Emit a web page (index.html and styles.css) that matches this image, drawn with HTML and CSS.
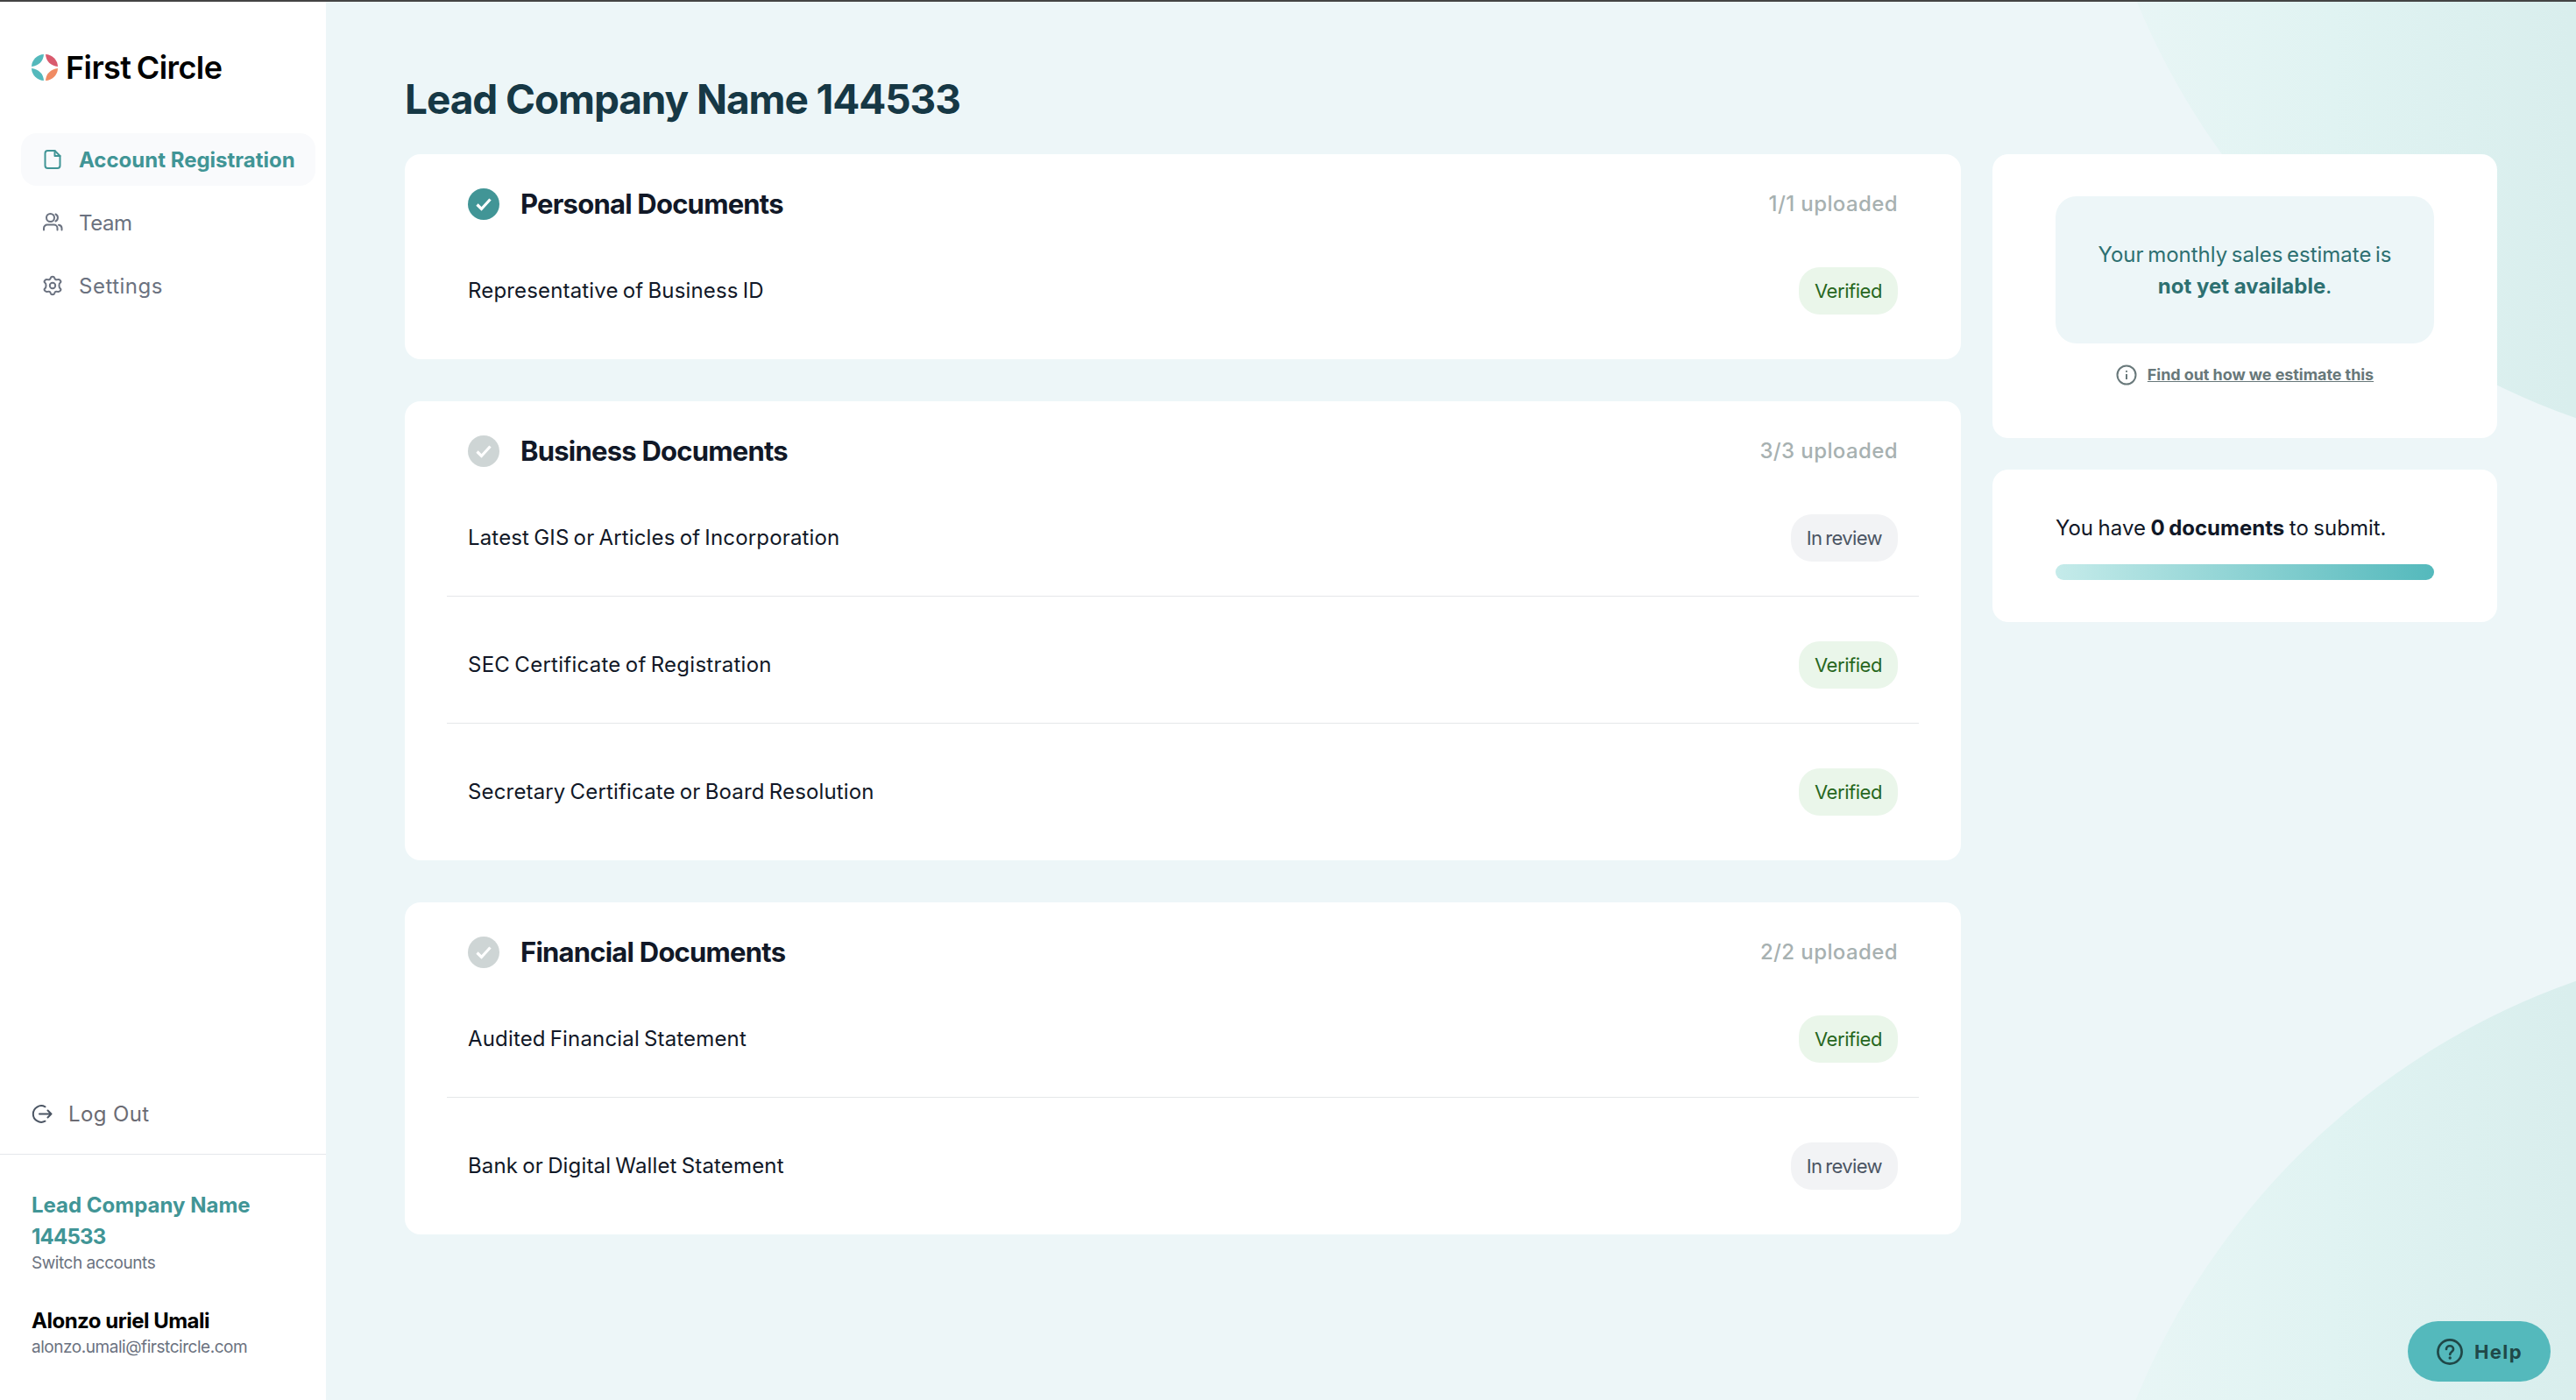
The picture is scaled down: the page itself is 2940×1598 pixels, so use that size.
FILE: index.html
```html
<!DOCTYPE html>
<html lang="en">
<head>
  <meta charset="UTF-8">
  <title>First Circle</title>
  <link rel="stylesheet" href="styles.css">
</head>
<body>
  <aside class="sidebar">
    <div class="logo">
      <svg width="30" height="30" viewBox="0 0 30 30">
        <path fill="#54b9bc" d="M14 0A14.500 14.500 0 0 0 0 14C8 13 13.500 8 14 0Z"/>
        <path fill="#d95a6d" d="M16 0A14.500 14.500 0 0 1 30 14C22 13 16.500 8 16 0Z"/>
        <path fill="#54b9bc" d="M14 30A14.500 14.500 0 0 1 0 16C8 17 13.500 22 14 30Z"/>
        <path fill="#f08b63" d="M16 30A14.500 14.500 0 0 0 30 16C22 17 16.500 22 16 30Z"/>
      </svg>
      <span>First Circle</span>
    </div>

    <nav class="nav">
      <a class="nav-item active">
        <svg class="icon" viewBox="0 0 24 24"><path d="M14.500 2H6.500A3 3 0 0 0 3.500 5v14A3 3 0 0 0 6.500 22h11a3 3 0 0 0 3-3V8Z"/><path d="M14.500 2v6h6"/></svg>
        <span>Account Registration</span>
      </a>
      <a class="nav-item team">
        <svg class="icon" viewBox="0 0 24 24"><circle cx="9.500" cy="6.500" r="4.500"/><path d="M2 20.500v-2a4 4 0 0 1 4-4h7.500a4 4 0 0 1 4 4v2"/><path d="M15.500 2.500a4.500 4.500 0 0 1 0 8"/><path d="M19 14.800c2 .4 3.500 1.800 3.500 3.700v2"/></svg>
        <span>Team</span>
      </a>
      <a class="nav-item settings">
        <svg class="icon" viewBox="0 0 24 24"><circle cx="12" cy="12" r="3.200"/><path d="M9.800 3.300C10.300 1.200 13.700 1.200 14.200 3.300C14.500 4.900 16.100 5.700 17.600 5.100C20.200 4.300 22.400 7.200 20.800 8.700C19 9.700 19 14.300 20.800 15.300C22.400 16.800 20.200 19.700 17.600 18.900C16.100 18.300 14.500 19.100 14.200 20.700C13.700 22.800 10.300 22.800 9.800 20.700C9.500 19.100 7.900 18.300 6.400 18.900C3.800 19.700 1.600 16.800 3.200 15.300C5 14.300 5 9.700 3.200 8.700C1.600 7.200 3.800 4.300 6.400 5.100C7.900 5.700 9.500 4.900 9.800 3.300Z"/></svg>
        <span>Settings</span>
      </a>
    </nav>

    <div class="logout">
      <svg class="icon" viewBox="0 0 24 24"><path d="M15.500 3.300A9.300 9.300 0 1 0 15.500 19.700"/><path d="M9 11.500h13.500M18.500 7.500l4 4-4 4"/></svg>
      <span>Log Out</span>
    </div>

    <div class="account">
      <div class="company">Lead Company Name <span class="number">144533</span></div>
      <div class="small switch">Switch accounts</div>
      <div class="user">Alonzo uriel Umali</div>
      <div class="small">alonzo.umali@firstcircle.com</div>
    </div>
  </aside>

  <main class="main">
    <div class="bg-circle bg-top"></div>
    <div class="bg-circle bg-bottom"></div>

    <h1>Lead Company Name 144533</h1>

    <div class="columns">
      <div class="documents">
        <section class="card">
          <div class="card-header">
            <svg class="check done" viewBox="0 0 36 36"><circle cx="18" cy="18" r="18"/><path d="M10.500 18.500l5 5 10-11"/></svg>
            <h2>Personal Documents</h2>
            <span class="count">1/1 uploaded</span>
          </div>
          <div class="row"><span>Representative of Business ID</span><span class="pill verified">Verified</span></div>
        </section>

        <section class="card">
          <div class="card-header">
            <svg class="check" viewBox="0 0 36 36"><circle cx="18" cy="18" r="18"/><path d="M10.500 18.500l5 5 10-11"/></svg>
            <h2>Business Documents</h2>
            <span class="count">3/3 uploaded</span>
          </div>
          <div class="row"><span>Latest GIS or Articles of Incorporation</span><span class="pill review">In review</span></div>
          <div class="row"><span class="wide">SEC Certificate of Registration</span><span class="pill verified">Verified</span></div>
          <div class="row"><span>Secretary Certificate or Board Resolution</span><span class="pill verified">Verified</span></div>
        </section>

        <section class="card">
          <div class="card-header">
            <svg class="check" viewBox="0 0 36 36"><circle cx="18" cy="18" r="18"/><path d="M10.500 18.500l5 5 10-11"/></svg>
            <h2>Financial Documents</h2>
            <span class="count">2/2 uploaded</span>
          </div>
          <div class="row"><span>Audited Financial Statement</span><span class="pill verified">Verified</span></div>
          <div class="row"><span>Bank or Digital Wallet Statement</span><span class="pill review">In review</span></div>
        </section>
      </div>

      <div class="summary">
        <section class="card estimate">
          <div class="estimate-box"><span class="tight">Your monthly sales estimate is</span><br><b>not yet available</b>.</div>
          <div class="find-out">
            <svg viewBox="0 0 24 24"><circle cx="12" cy="12" r="10.500"/><path d="M12 11v6M12 7v1.700"/></svg>
            <a>Find out how we estimate this</a>
          </div>
        </section>
        <section class="card progress">
          <div class="progress-text">You have <b>0 documents</b> to submit.</div>
          <div class="bar"></div>
        </section>
      </div>
    </div>
  </main>

  <button class="help">
    <svg viewBox="0 0 30 30"><circle cx="15" cy="15" r="13.600"/><path d="M11 12c0-5 8-5 8 0 0 3-3.800 3-3.800 6"/><circle class="dot" cx="15.200" cy="22" r="1.700"/></svg>
    <span>Help</span>
  </button>
</body>
</html>
```

FILE: styles.css
```css
* {
  box-sizing: border-box;
}

body {
  margin: 0;
  display: flex;
  height: 100vh;
  overflow: hidden;
  border-top: 2px solid #444;
  background: #edf6f8;
  font-family: Inter, "Liberation Sans", sans-serif;
  font-size: 24px;
  line-height: 36px;
  color: #111827;
}

h1, h2 {
  margin: 0;
  font-weight: 700;
}

.sidebar {
  width: 372px;
  flex-shrink: 0;
  display: flex;
  flex-direction: column;
  background: #fff;
}

.logo {
  display: flex;
  align-items: center;
  gap: 9px;
  height: 36px;
  margin: 57px 36px 0;
  font-size: 36px;
  font-weight: 600;
  letter-spacing: -0.6px;
  word-spacing: -2px;
  color: #000;
}

.nav {
  display: flex;
  flex-direction: column;
  gap: 12px;
  margin-top: 57px;
  padding: 0 12px 0 24px;
}

.nav-item {
  display: flex;
  align-items: center;
  gap: 18px;
  height: 60px;
  padding-left: 24px;
  border-radius: 18px;
  color: #6b7280;
}

.nav-item span {
  padding-top: 2px;
}

.nav-item.active {
  background: #f9fafc;
  color: #419596;
  font-weight: 700;
}

.team {
  letter-spacing: -0.4px;
}

.settings {
  letter-spacing: 0.5px;
}

.icon {
  width: 24px;
  height: 24px;
  fill: none;
  stroke: currentColor;
  stroke-width: 2;
  stroke-linecap: round;
  stroke-linejoin: round;
}

.logout {
  display: flex;
  align-items: center;
  gap: 18px;
  margin-top: auto;
  padding: 0 36px 27px;
  letter-spacing: 0.4px;
  color: #6b6b73;
}

.logout .icon {
  stroke: #4b5563;
}

.account {
  border-top: 1px solid #e5e7eb;
  padding: 40px 36px 48px;
}

.company {
  font-weight: 700;
  color: #419596;
}

.number {
  display: block;
  letter-spacing: -0.8px;
}

.small {
  font-size: 19px;
  line-height: 24px;
  letter-spacing: -0.46px;
  color: #6b7280;
}

.switch {
  margin-bottom: 36px;
}

.user {
  font-weight: 700;
  letter-spacing: -0.5px;
  color: #000;
}

.main {
  position: relative;
  flex: 1;
  overflow: hidden;
  padding: 75px 90px 0;
}

/* decorative circles on the right side */
.bg-circle {
  position: absolute;
  right: -1125px;
  width: 1690px;
  height: 1690px;
  border-radius: 50%;
  background: linear-gradient(90deg, #eaf6f6 0%, #e0f3f2 17%, #d9eeed 33%);
}

.bg-top {
  top: -1167px;
}

.bg-bottom {
  top: 1070px;
}

h1 {
  position: relative;
  font-size: 46px;
  line-height: 72px;
  margin-bottom: 27px;
  letter-spacing: -1.1px;
  color: #163845;
}

.columns {
  position: relative;
  display: grid;
  grid-template-columns: 1776px 576px;
  gap: 36px;
  align-items: start;
}

.documents {
  display: flex;
  flex-direction: column;
  gap: 48px;
}

.card {
  background: #fff;
  border-radius: 18px;
}

.documents .card {
  padding: 0 48px 12px;
}

.card-header {
  display: flex;
  align-items: center;
  height: 78px;
  padding: 36px 24px 0;
}

.check {
  width: 36px;
  height: 36px;
  margin-right: 24px;
  fill: #ced5d5;
}

.check.done {
  fill: #419596;
}

.check path {
  fill: none;
  stroke: #fff;
  stroke-width: 3.2;
}

h2 {
  flex: 1;
  font-size: 31px;
  letter-spacing: -0.78px;
}

.count {
  font-weight: 500;
  letter-spacing: 0.4px;
  color: #a7b1b1;
}

.row {
  display: flex;
  align-items: center;
  justify-content: space-between;
  padding: 51px 24px 39px;
  letter-spacing: 0.16px;
  word-spacing: -1.8px;
}

.row + .row {
  border-top: 1px solid #e5e7e9;
}

.row .wide {
  letter-spacing: 0.26px;
}

.pill {
  height: 54px;
  padding: 0 18px;
  border-radius: 24px;
  font-size: 22px;
  line-height: 54px;
}

.row .verified {
  letter-spacing: -0.45px;
  background: #eaf6ea;
  color: #27671e;
}

.row .review {
  letter-spacing: -0.6px;
  background: #f2f3f5;
  color: #4b5563;
}

.summary {
  display: flex;
  flex-direction: column;
  gap: 36px;
}

.estimate {
  height: 324px;
  padding: 48px 72px;
}

.estimate-box {
  padding: 49px 0 47px;
  border-radius: 24px;
  background: #edf6f8;
  color: #2d7071;
  text-align: center;
}

.tight {
  letter-spacing: -0.02px;
  word-spacing: -2px;
}

.find-out {
  display: flex;
  align-items: center;
  justify-content: center;
  gap: 12px;
  margin-top: 18px;
  font-size: 18px;
  font-weight: 700;
  letter-spacing: -0.07px;
  color: #68787a;
}

.find-out svg {
  width: 24px;
  height: 24px;
  fill: none;
  stroke: currentColor;
  stroke-width: 2;
}

.find-out a {
  text-decoration: underline;
}

.progress {
  height: 174px;
  padding: 49px 72px 47px;
}

.progress-text {
  word-spacing: -1.2px;
}

.bar {
  height: 18px;
  margin-top: 23px;
  border-radius: 9px;
  background: linear-gradient(90deg, #c5ebea, #54b9bc);
}

.help {
  position: fixed;
  right: 29px;
  bottom: 21px;
  width: 163px;
  height: 69px;
  display: flex;
  align-items: center;
  gap: 13px;
  padding: 0 0 0 33px;
  border: none;
  border-radius: 35px;
  background: #54b9bc;
  font-family: inherit;
  font-size: 22px;
  font-weight: 700;
  letter-spacing: 1.4px;
  color: #204848;
}

.help svg {
  width: 30px;
  height: 30px;
  fill: none;
  stroke: currentColor;
  stroke-width: 2.7;
  stroke-linecap: round;
}

.help .dot {
  fill: currentColor;
  stroke: none;
}
```
